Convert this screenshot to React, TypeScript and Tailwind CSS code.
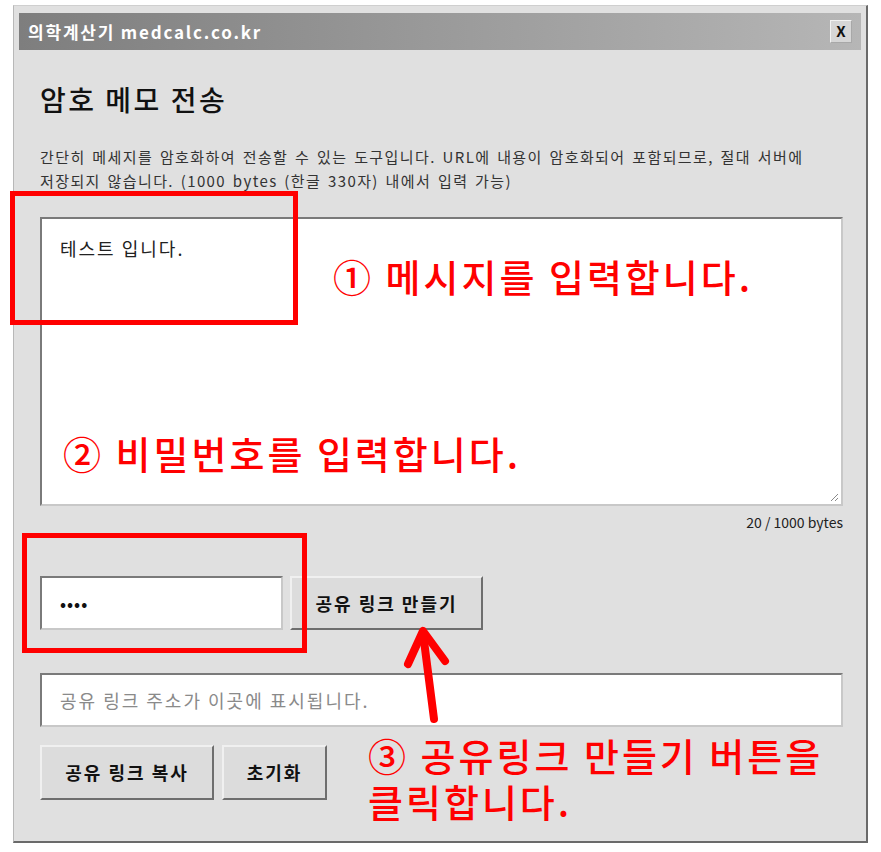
import React from "react";

const ui = "font-['Noto_Sans_CJK_KR','Noto_Sans',sans-serif]";
const note = "font-['Noto_Sans_CJK_KR',sans-serif] text-[#ff0000] font-medium text-[38px] tracking-[3px]";

const inset =
  "border-2 border-t-[#7a7a7a] border-l-[#7a7a7a] border-b-[#c8c8c8] border-r-[#c8c8c8] bg-white";
const outset =
  "border-2 border-t-[#f0f0f0] border-l-[#f0f0f0] border-b-[#6e6e6e] border-r-[#6e6e6e] bg-[#dcdcdc] text-[18px] tracking-[2px] font-bold text-[#111]";

export default function App() {
  return (
    <div className={`relative min-h-[852px] w-[881px] bg-white ${ui}`}>
      {/* dialog window */}
      <div className="ml-[13px] mt-[5px] flex h-[838px] w-[855px] flex-col border border-r-2 border-b-2 border-t-[#cfcfcf] border-l-[#b8b8b8] border-r-[#6a6a6a] border-b-[#6a6a6a] bg-[#e0e0e0] px-[5px] pt-[7px]">
        {/* Title bar */}
        <div className="flex h-[37px] items-center justify-between bg-gradient-to-r from-[#7e7e7e] via-[#9a9a9a] to-[#b6b6b6] pl-[9px] pr-[9px]">
          <span className="text-[17px] font-bold tracking-[1.8px] text-white">의학계산기 medcalc.co.kr</span>
          <button className="flex h-[23px] w-[22px] items-center justify-center border border-t-[#f2f2f2] border-l-[#f2f2f2] border-b-[#a8a8a8] border-r-[#a8a8a8] bg-[#d6d6d6] text-[15px] font-bold text-[#111]">
            X
          </button>
        </div>

        {/* Content */}
        <div className="flex flex-col px-[21px]">
          <h1 className="mt-[31px] text-[28px] font-medium leading-[36px] tracking-[2.5px] text-[#111]">암호 메모 전송</h1>
          <p className="mt-[28px] text-[15px] leading-[24px] tracking-[1.4px] text-[#333] [word-spacing:2px]">
            간단히 메세지를 암호화하여 전송할 수 있는 도구입니다. URL에 내용이 암호화되어 포함되므로, 절대 서버에
            <br />
            저장되지 않습니다. (1000 bytes (한글 330자) 내에서 입력 가능)
          </p>

          <div className={`mt-[24px] h-[289px] w-[803px] ${inset} relative px-[18px] pt-[16px] text-[18px] tracking-[2px] text-[#222]`}>
            테스트 입니다.
            <svg className="absolute bottom-[2px] right-[2px]" width="10" height="10" viewBox="0 0 10 10">
              <path d="M9 2 L2 9 M9 6 L6 9" stroke="#8a8a8a" strokeWidth="1" />
            </svg>
          </div>
          <div className="mt-[6px] w-[803px] text-right text-[14px] text-[#222]">20 / 1000 bytes</div>

          <div className="mt-[43px] flex gap-[7px]">
            <div className={`flex h-[54px] w-[243px] items-center pl-[18px] ${inset}`}>
              <span className="text-[16px] font-bold leading-none tracking-[1px] text-[#111]">••••</span>
            </div>
            <button className={`h-[54px] w-[193px] ${outset}`}>공유 링크 만들기</button>
          </div>

          <div className={`mt-[43px] flex h-[54px] w-[803px] items-center pl-[18px] text-[18px] tracking-[2px] text-[#8a8a8a] ${inset}`}>
            공유 링크 주소가 이곳에 표시됩니다.
          </div>

          <div className="mt-[18px] flex gap-[8px]">
            <button className={`h-[55px] w-[174px] ${outset}`}>공유 링크 복사</button>
            <button className={`h-[55px] w-[105px] ${outset}`}>초기화</button>
          </div>
        </div>
      </div>

      {/* Annotations */}
      <div className="absolute left-[10px] top-[186px] h-[134px] w-[288px] border-[5px] border-[#ff0000]" />
      <div className="absolute left-[22px] top-[528px] h-[120px] w-[285px] border-[5px] border-[#ff0000]" />

      <div className={`absolute left-[333px] top-[247px] leading-[48px] ${note}`}>① 메시지를 입력합니다.</div>
      <div className={`absolute left-[63px] top-[424px] leading-[48px] ${note}`}>② 비밀번호를 입력합니다.</div>
      <div className={`absolute left-[368px] top-[730px] leading-[40px] ${note}`}>③ 공유링크 만들기 버튼을</div>
      <div className={`absolute left-[368px] top-[776px] leading-[40px] ${note}`}>클릭합니다.</div>

      <svg className="absolute left-0 top-0" width="881" height="852" viewBox="0 0 881 852">
        <g stroke="#ff0000" strokeWidth="8" strokeLinecap="round" strokeLinejoin="round" fill="none">
          <path d="M434 714 L423 628" />
          <path d="M408 659 L423 626 L445 656" />
        </g>
      </svg>
    </div>
  );
}
